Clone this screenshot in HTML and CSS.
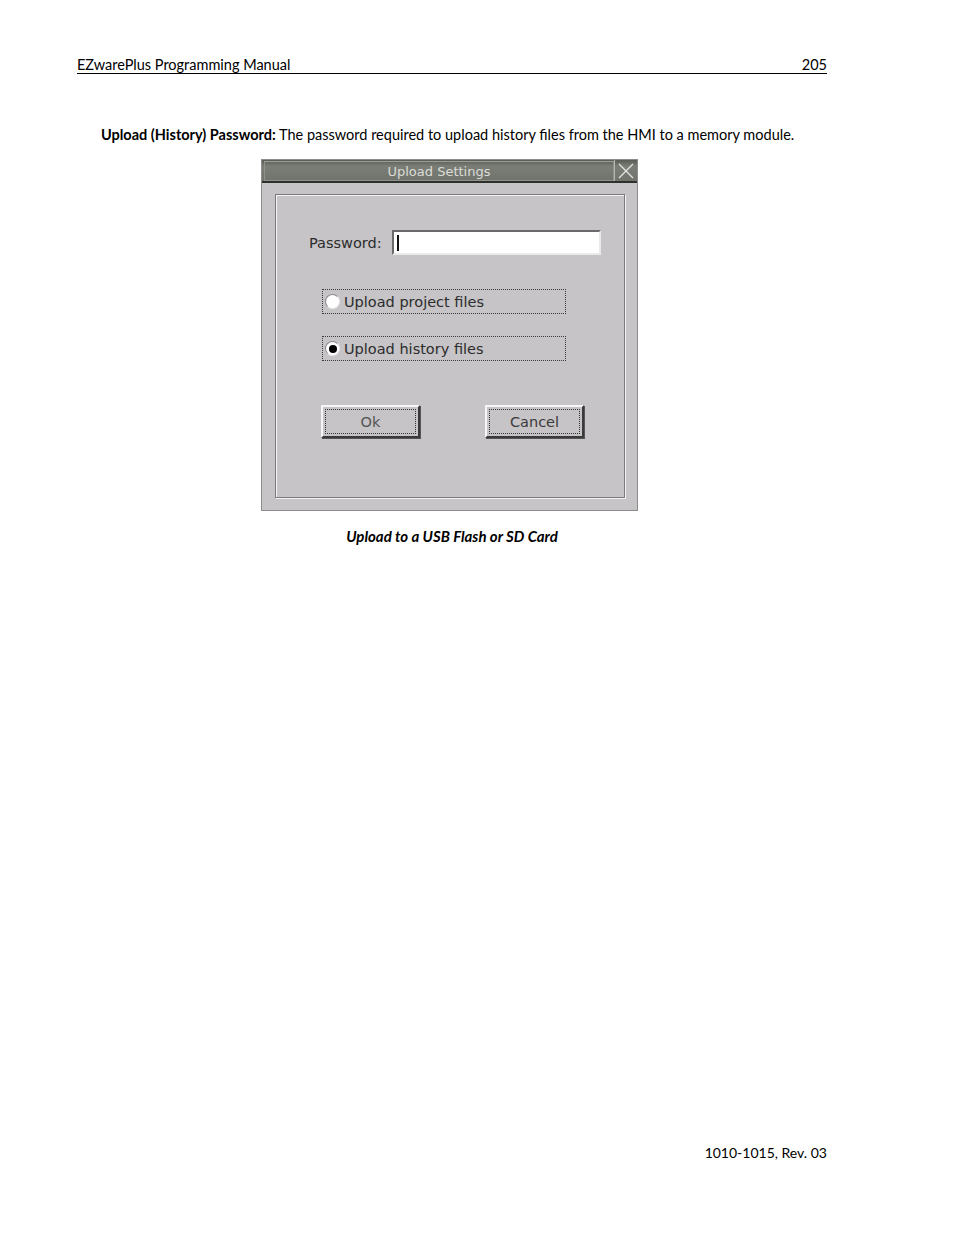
FILE: index.html
```html
<!DOCTYPE html>
<html>
<head>
<meta charset="utf-8">
<link rel="stylesheet" href="styles.css">
</head>
<body>
<div class="page">
  <header class="running-head">
    <span>EZwarePlus Programming Manual</span>
    <span>205</span>
  </header>
  <p class="para"><b>Upload (History) Password:</b> The password required to upload history files from the HMI to a memory module.</p>

  <div class="dialog">
    <div class="titlebar">
      <div class="title">Upload Settings</div>
      <div class="close">
        <svg width="20" height="18" viewBox="0 0 20 18"><path d="M3 2 L17 16 M17 2 L3 16" stroke="#e4e4e4" stroke-width="1.3" fill="none"/></svg>
      </div>
    </div>
    <div class="dbody">
      <div class="group">
        <div class="pwrow">
          <span class="label">Password:</span>
          <div class="input"><span class="caret"></span></div>
        </div>
        <div class="radio first"><span class="dot"></span><span>Upload project files</span></div>
        <div class="radio second"><span class="dot on"></span><span>Upload history files</span></div>
        <div class="buttons">
          <div class="btn"><div class="focus ok">Ok</div></div>
          <div class="btn"><div class="focus">Cancel</div></div>
        </div>
      </div>
    </div>
  </div>

  <p class="caption">Upload to a USB Flash or SD Card</p>

  <footer class="footer">1010-1015, Rev. 03</footer>
</div>
</body>
</html>
```

FILE: styles.css
```css
html, body {
  margin: 0;
  padding: 0;
  background: #fff;
}
.page {
  width: 954px;
  height: 1235px;
  padding: 0 127px 0 77px;
  box-sizing: border-box;
  font-family: Lato, "Open Sans", sans-serif;
  font-size: 14.5px;
  color: #000;
  display: flex;
  flex-direction: column;
}
.running-head {
  margin-top: 56px;
  display: flex;
  justify-content: space-between;
  border-bottom: 1px solid #000;
  line-height: 17px;
  padding-bottom: 0;
}
.para {
  margin: 52px 0 0 24px;
  line-height: 18px;
}
.dialog {
  margin: 15px 0 0 184px;
  width: 377px;
  height: 352px;
  box-sizing: border-box;
  background: #c6c4c6;
  border: 1px solid #8c8c8c;
  font-family: "DejaVu Sans", sans-serif;
  display: flex;
  flex-direction: column;
}
.titlebar {
  height: 21px;
  flex: none;
  display: flex;
  background: linear-gradient(#585c55, #7a7e76 30%, #6f736b 100%);
  border-bottom: 2px solid #2e302c;
}
.title {
  flex: 1;
  text-align: center;
  color: #dcdcd8;
  font-size: 13px;
  line-height: 19px;
  border: 1px solid #8e928a;
  border-top-color: #9a9e96;
  margin: 1px 0 0 2px;
}
.close {
  width: 22px;
  flex: none;
  border-left: 1px solid #b4b6b0;
  display: flex;
  align-items: center;
  justify-content: center;
}
.dbody {
  flex: 1;
  padding: 11px 12px 12px 13px;
  display: flex;
}
.group {
  flex: 1;
  border: 1px solid #7a7a7a;
  box-shadow: inset 1px 1px 0 #f4f4f4, 1px 1px 0 #f4f4f4;
  display: flex;
  flex-direction: column;
  font-size: 14.5px;
  color: #2c2c2c;
}
.pwrow {
  margin-top: 35px;
  display: flex;
  align-items: center;
  height: 25px;
}
.label {
  margin-left: 33px;
  width: 83px;
}
.input {
  width: 209px;
  height: 25px;
  box-sizing: border-box;
  background: #fff;
  border: 2px solid;
  border-color: #6a6a6a #eaeaea #eaeaea #6a6a6a;
  display: flex;
  align-items: center;
}
.caret {
  width: 2px;
  height: 16px;
  background: #111;
  margin-left: 3px;
}
.radio {
  margin-left: 46px;
  width: 244px;
  height: 25px;
  box-sizing: border-box;
  border: 1px dotted #3a3a3a;
  display: flex;
  align-items: center;
  gap: 4px;
  padding-left: 2px;
}
.radio.first { margin-top: 34px; }
.radio.second { margin-top: 22px; }
.dot {
  width: 15px;
  height: 15px;
  box-sizing: border-box;
  border-radius: 50%;
  background: #fff;
  border: 1px solid #8a8a8a;
  border-right-color: #e8e8e8;
  border-bottom-color: #e8e8e8;
  display: flex;
  align-items: center;
  justify-content: center;
}
.dot.on::after {
  content: "";
  width: 8px;
  height: 8px;
  border-radius: 50%;
  background: #000;
}
.buttons {
  margin: 44px 0 0 45px;
  display: flex;
  gap: 65px;
}
.btn {
  width: 99px;
  height: 33px;
  box-sizing: border-box;
  background: #c6c4c6;
  border: 2px solid;
  border-color: #f6f6f6 #3a3a3a #3a3a3a #f6f6f6;
  box-shadow: 1px 1px 0 #555;
  padding: 2px;
  display: flex;
}
.focus {
  flex: 1;
  border: 1px dotted #333;
  display: flex;
  align-items: center;
  justify-content: center;
  color: #3a3a3a;
}
.focus.ok { color: #555; }
.caption {
  margin: 16px 0 0 0;
  text-align: center;
  font-weight: bold;
  font-style: italic;
  font-size: 15px;
  line-height: 18px;
  padding-left: 0;
}
.footer {
  margin-top: auto;
  margin-bottom: 73px;
  text-align: right;
  line-height: 18px;
  font-size: 14px;
}
```
